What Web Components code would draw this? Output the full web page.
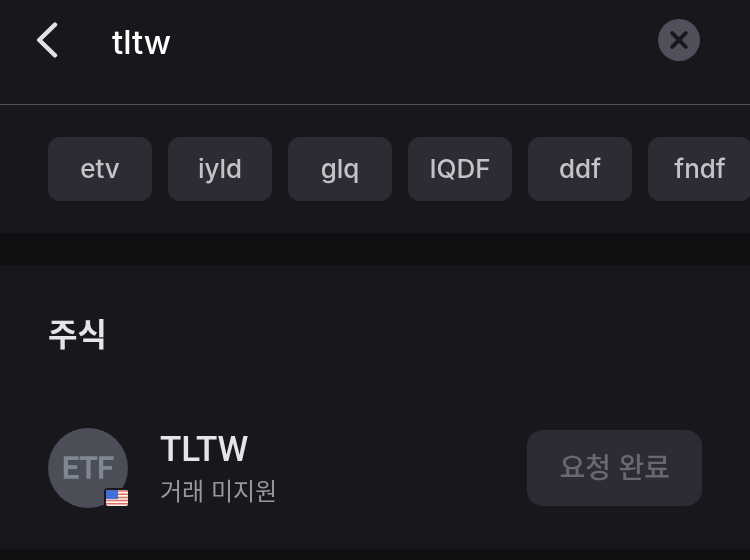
<!DOCTYPE html>
<html lang="ko">
<head>
<meta charset="utf-8">
<meta name="viewport" content="width=device-width, initial-scale=1">
<title>주식 검색</title>
<style>
    body {
        margin: 0;
        min-height: 100vh;
        background-color: #101012;
        color: #e5e5e8;
        font-family: Inter, "Noto Sans CJK KR", sans-serif;
    }
</style>
</head>
<body>
<search-bar value="tltw"></search-bar>
<recent-searches>
    <search-chip>etv</search-chip>
    <search-chip>iyld</search-chip>
    <search-chip>glq</search-chip>
    <search-chip>IQDF</search-chip>
    <search-chip>ddf</search-chip>
    <search-chip>fndf</search-chip>
</recent-searches>
<result-section>
    <span slot="title">주식</span>
    <stock-row>
        <etf-logo slot="logo"></etf-logo>
        <span slot="name">TLTW</span>
        <span slot="status">거래 미지원</span>
        <span slot="action">요청 완료</span>
    </stock-row>
</result-section>

<script>
class SearchBar extends HTMLElement {
    constructor() {
        super();
        this.attachShadow({ mode: 'open' });
        this.shadowRoot.innerHTML = `
            <style>
                :host {
                    display: block;
                    background-color: #18181c;
                    border-bottom: 1px solid #505058;
                }
                form {
                    display: flex;
                    align-items: center;
                    height: 80px;
                    padding: 0 50px 24px 32px;
                }
                button {
                    flex: none;
                    display: block;
                    padding: 0;
                    border: 0;
                    background: none;
                }
                svg {
                    display: block;
                }
                input {
                    flex: 1;
                    min-width: 0;
                    height: 48px;
                    margin: 0 24px 0 48px;
                    padding: 4px 0 0;
                    border: 0;
                    outline: 0;
                    background: none;
                    color: #fff;
                    font: 500 33px/48px Inter, "Noto Sans CJK KR", sans-serif;
                }
            </style>
            <form role="search">
                <button type="button" aria-label="뒤로">
                    <svg width="32" height="40" viewBox="0 0 32 40" fill="none" stroke="#e2e2e6" stroke-width="4.4" stroke-linecap="round" stroke-linejoin="round">
                        <path d="M23 4.700L7.200 20L23 35.300"/>
                    </svg>
                </button>
                <input type="text" aria-label="검색어">
                <button type="button" id="clear" aria-label="지우기">
                    <svg width="42" height="42" viewBox="0 0 42 42">
                        <circle cx="21" cy="21" r="21" fill="#50505a"/>
                        <path d="M14.200 14.200L27.800 27.800M27.800 14.200L14.200 27.800" stroke="#18181c" stroke-width="4" stroke-linecap="round"/>
                    </svg>
                </button>
            </form>
        `;
    }
    connectedCallback() {
        const input = this.shadowRoot.querySelector('input');
        input.value = this.getAttribute('value') || '';
        this.shadowRoot.querySelector('#clear').onclick = () => {
            input.value = '';
        };
    }
}

class RecentSearches extends HTMLElement {
    constructor() {
        super();
        this.attachShadow({ mode: 'open' });
        this.shadowRoot.innerHTML = `
            <style>
                :host {
                    display: flex;
                    gap: 16px;
                    padding: 32px 48px;
                    overflow-x: auto;
                    scrollbar-width: none;
                    background-color: #18181c;
                }
            </style>
            <slot></slot>
        `;
    }
}

class SearchChip extends HTMLElement {
    constructor() {
        super();
        this.attachShadow({ mode: 'open' });
        this.shadowRoot.innerHTML = `
            <style>
                :host {
                    display: block;
                    flex: none;
                }
                button {
                    display: block;
                    min-width: 104px;
                    height: 64px;
                    padding: 0 20px;
                    border: 0;
                    border-radius: 12px;
                    background-color: #2c2c34;
                    color: #c3c3c8;
                    font: 500 26px/32px Inter, "Noto Sans CJK KR", sans-serif;
                }
            </style>
            <button type="button"><slot></slot></button>
        `;
    }
}

class ResultSection extends HTMLElement {
    constructor() {
        super();
        this.attachShadow({ mode: 'open' });
        this.shadowRoot.innerHTML = `
            <style>
                :host {
                    display: block;
                    margin-top: 32px;
                    padding: 48px 48px 36px;
                    background-color: #18181c;
                }
                h2 {
                    margin: 0 0 66px;
                    font-size: 32px;
                    line-height: 44px;
                    font-weight: 700;
                }
            </style>
            <h2><slot name="title"></slot></h2>
            <slot></slot>
        `;
    }
}

class StockRow extends HTMLElement {
    constructor() {
        super();
        this.attachShadow({ mode: 'open' });
        this.shadowRoot.innerHTML = `
            <style>
                :host {
                    display: flex;
                    align-items: center;
                    gap: 32px;
                }
                .info {
                    flex: 1;
                    min-width: 0;
                    padding-top: 6px;
                    line-height: 42px;
                }
                .name {
                    font-family: Roboto, "Noto Sans CJK KR", sans-serif;
                    font-size: 35px;
                    font-weight: 500;
                }
                .status {
                    color: #97979c;
                    font-size: 24px;
                }
                button {
                    flex: none;
                    height: 76px;
                    padding: 0 32px;
                    border: 0;
                    border-radius: 16px;
                    background-color: #2c2c34;
                    color: #68686f;
                    font: 500 28px/40px Inter, "Noto Sans CJK KR", sans-serif;
                }
            </style>
            <slot name="logo"></slot>
            <div class="info">
                <div class="name"><slot name="name"></slot></div>
                <div class="status"><slot name="status"></slot></div>
            </div>
            <button type="button" disabled><slot name="action"></slot></button>
        `;
    }
}

class EtfLogo extends HTMLElement {
    constructor() {
        super();
        this.attachShadow({ mode: 'open' });
        this.shadowRoot.innerHTML = `
            <style>
                :host {
                    position: relative;
                    flex: none;
                    display: block;
                    width: 80px;
                    height: 80px;
                }
                svg {
                    display: block;
                }
                text {
                    font: 400 30px Roboto, sans-serif;
                    fill: #808794;
                    stroke: #808794;
                    stroke-width: 1.4px;
                    stroke-linejoin: round;
                    text-anchor: middle;
                }
                /* country flag over the lower right edge */
                .flag {
                    position: absolute;
                    right: -2px;
                    bottom: 0;
                }
            </style>
            <svg width="80" height="80" viewBox="0 0 80 80">
                <circle cx="40" cy="40" r="40" fill="#4b4d57"/>
                <text x="40" y="50">ETF</text>
            </svg>
            <svg class="flag" width="26" height="20" viewBox="0 0 26 20">
                <clipPath id="flag"><rect x="2" y="2" width="22" height="16" rx="2"/></clipPath>
                <rect width="26" height="20" rx="4" fill="#18181c"/>
                <g clip-path="url(#flag)">
                    <rect x="2" y="2" width="22" height="16" fill="#fff0ea"/>
                    <path d="M2 3H24M2 6.200H24M2 9.400H24M2 12.600H24M2 15.800H24" stroke="#d87067" stroke-width="1.500"/>
                    <rect x="2" y="2" width="12" height="9" fill="#416fd6"/>
                </g>
            </svg>
        `;
    }
}

customElements.define('search-bar', SearchBar);
customElements.define('recent-searches', RecentSearches);
customElements.define('search-chip', SearchChip);
customElements.define('result-section', ResultSection);
customElements.define('stock-row', StockRow);
customElements.define('etf-logo', EtfLogo);
</script>
</body>
</html>
